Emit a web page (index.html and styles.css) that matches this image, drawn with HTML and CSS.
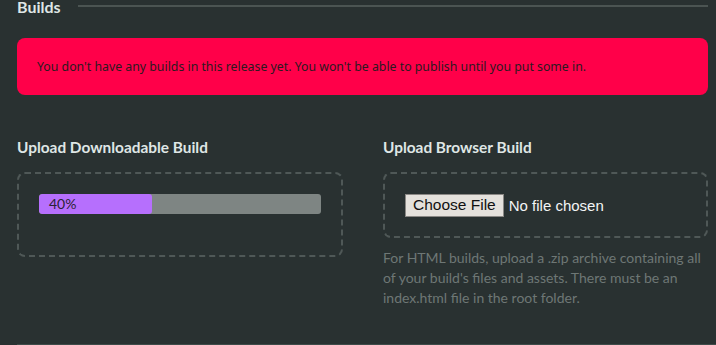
FILE: index.html
```html
<!DOCTYPE html>
<html lang="en">
<head>
  <meta charset="UTF-8" />
  <title>Builds</title>
  <link rel="stylesheet" href="styles.css">
</head>
<body>
  <section class="builds">
    <div class="titulo-linha">
      <h2 class="titulo">Builds</h2>
      <div class="linha"></div>
    </div>

    <div class="alerta">
      You don't have any builds in this release yet. You won't be able to publish until you put some in.
    </div>

    <div class="uploads">
      <div class="coluna">
        <h3 class="rotulo">Upload Downloadable Build</h3>
        <div class="zona zona-alta">
          <div class="progresso">
            <div class="progresso-barra" style="width: 40%">40%</div>
          </div>
        </div>
      </div>
      <div class="coluna">
        <h3 class="rotulo">Upload Browser Build</h3>
        <div class="zona">
          <input type="file" class="arquivo" />
        </div>
        <p class="ajuda">
          For HTML builds, upload a .zip archive containing all of your build's files and assets. There must be an index.html file in the root folder.
        </p>
      </div>
    </div>
  </section>
  <div class="rodape-linha"></div>
</body>
</html>
```

FILE: styles.css
```css
* {
  margin: 0; padding: 0; box-sizing: border-box;
}
body {
  background: #293131;
  font-family: 'Lato', 'Noto Sans', sans-serif;
  color: #dfe6e5;
  padding: 0 8px 0 17px;
  overflow: hidden;
  height: 345px;
}

.titulo-linha {
  display: flex;
  align-items: center;
  gap: 17px;
  margin-top: -6px;
  height: 24px;
}

.titulo {
  font-size: 16px;
  font-weight: 700;
  color: #dfe6e5;
}

.linha {
  flex: 1;
  height: 2px;
  background: #4b5452;
  margin-top: -1px;
}

.alerta {
  margin-top: 20px;
  background: #ff0049;
  border-radius: 8px;
  height: 57px;
  padding: 0 20px;
  display: flex;
  align-items: center;
  font-family: 'Noto Sans', sans-serif;
  font-size: 12.3px;
  color: #2c1a20;
}

.uploads {
  display: grid;
  grid-template-columns: 326px 325px;
  gap: 40px;
  margin-top: 42px;
}

.rotulo {
  font-size: 15.4px;
  font-weight: 700;
  color: #dfe6e5;
  height: 35px;
  line-height: 20px;
}

.zona {
  border: 2px dashed #4f5857;
  border-radius: 8px;
  height: 66px;
  display: flex;
  align-items: center;
  padding: 0 20px;
}

.zona-alta {
  height: 85px;
  align-items: flex-start;
  padding-top: 20px;
}

.progresso {
  width: 100%;
  height: 20px;
  background: #7e8583;
  border-radius: 3px;
  overflow: hidden;
}

.progresso-barra {
  height: 100%;
  background: #b66ffd;
  border-radius: 3px;
  padding-left: 10px;
  font-size: 14px;
  line-height: 20px;
  color: #2a2235;
}

.arquivo {
  font-family: 'Liberation Sans', Arial, sans-serif;
  font-size: 15px;
  color: #f3f5f5;
}

.arquivo::file-selector-button {
  font-family: 'Liberation Sans', Arial, sans-serif;
  font-size: 15.5px;
  color: #111;
  background: #e4e1dc;
  border: 1px solid #8a8885;
  border-radius: 0;
  padding: 1px 7px;
  height: 23px;
  margin-right: 5px;
}

.ajuda {
  margin-top: 10px;
  font-size: 14px;
  line-height: 20px;
  color: #6e7775;
}

.rodape-linha {
  position: absolute;
  left: 17px;
  right: 0;
  top: 344px;
  height: 1px;
  background: #3e4b49;
}
```
